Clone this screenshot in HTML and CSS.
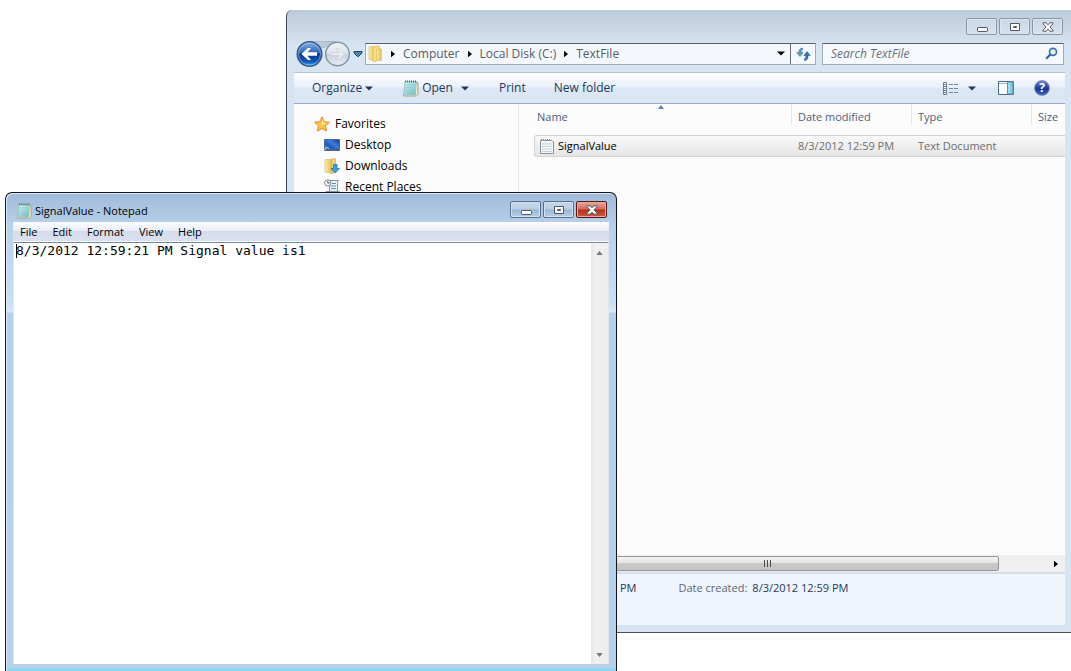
FILE: index.html
```html
<!DOCTYPE html>
<html lang="en">
<head>
<meta charset="utf-8">
<title>SignalValue - Notepad</title>
<link rel="stylesheet" href="styles.css">
</head>
<body>
<svg class="defs" aria-hidden="true">
  <defs>
    <linearGradient id="pad" x1="0" y1="0" x2="1" y2="1"><stop offset="0" stop-color="#d5f3f1"/><stop offset=".55" stop-color="#9fd6da"/><stop offset="1" stop-color="#72b5c0"/></linearGradient>
    <linearGradient id="gold" x1="0" x2="1"><stop offset="0" stop-color="#fbeeb0"/><stop offset="1" stop-color="#e3bd52"/></linearGradient>
    <linearGradient id="back" x1="0" y1="0" x2="0" y2="1"><stop offset="0" stop-color="#8bb1e0"/><stop offset=".45" stop-color="#2f66b8"/><stop offset=".5" stop-color="#0c3a94"/><stop offset=".8" stop-color="#1454b8"/><stop offset="1" stop-color="#3ba8f0"/></linearGradient>
    <linearGradient id="fwd" x1="0" y1="0" x2="0" y2="1"><stop offset="0" stop-color="#f0f4f9"/><stop offset=".48" stop-color="#dde4ec"/><stop offset=".52" stop-color="#c8d2dd"/><stop offset="1" stop-color="#e6edf4"/></linearGradient>
    <linearGradient id="screen" x1="0" y1="1" x2="1" y2="0"><stop offset="0" stop-color="#7fb3ea"/><stop offset=".35" stop-color="#2458b8"/><stop offset=".6" stop-color="#3d7bdc"/><stop offset="1" stop-color="#12388c"/></linearGradient>
    <symbol id="notepad" viewBox="0 0 16 17">
      <path d="M2.500 2.500h12.500v12l-1.500 1.500H.8z" fill="#f5edd0" stroke="#a99f78"/>
      <path d="M2 1.500h11.500L12.500 15H.8z" fill="url(#pad)" stroke="#8fc4c8" stroke-width=".6"/>
      <path d="M2.500 5h9M2.300 7.500h9M2 10h9M1.800 12.500h9" stroke="#8cc8cd" stroke-width=".6"/>
      <path d="M2.500 .5v2M4.500 .5v2M6.500 .5v2M8.500 .5v2M10.500 .5v2M12.500 .5v2" stroke="#476770" stroke-width="1"/>
    </symbol>
    <symbol id="min" viewBox="0 0 12 10"><rect x="1.500" y="5.500" width="10" height="4" rx=".7" fill="#fff" stroke="#505768"/></symbol>
    <symbol id="max" viewBox="0 0 12 10"><path d="M1.500 1.500h9v7h-9zM4.500 4.500h3v1h-3z" fill="#fff" fill-rule="evenodd" stroke="#505768"/></symbol>
    <symbol id="close" viewBox="0 0 12 10"><path d="M1 .8h3l2 2 2-2h3v1L8 5l3 3.200v1H8l-2-2-2 2H1v-1L4 5 1 1.800z" fill="#fff" stroke="#505768"/></symbol>
    <symbol id="crumb" viewBox="0 0 5 8"><path d="M0 0l5 4-5 4z"/></symbol>
    <symbol id="drop" viewBox="0 0 8 5"><path d="M0 .5h8L4 4.500z"/></symbol>
  </defs>
</svg>

<main class="desktop">
<section class="explorer" aria-label="TextFile">
  <div class="caption">
    <button class="cap" aria-label="Minimize"><svg class="glyph"><use href="#min"/></svg></button>
    <button class="cap" aria-label="Maximize"><svg class="glyph"><use href="#max"/></svg></button>
    <button class="cap" aria-label="Close"><svg class="glyph"><use href="#close"/></svg></button>
  </div>
  <div class="navbar">
    <div class="travel">
      <svg width="54" height="28" viewBox="0 0 54 28" class="travel-art" aria-hidden="true">
        <path d="M14 1.500h26c-8 2-9 6-12.500 6S22 3.500 14 1.500z" fill="#bccbdc" stroke="#a3b5c8"/>
        <circle cx="13.500" cy="14" r="12.300" fill="url(#back)" stroke="#3b5788" stroke-width="1.400"/>
        <circle cx="13.500" cy="14" r="11" fill="none" stroke="#b9d4f4" stroke-opacity=".55"/>
        <path d="M5.500 14l6.500-6h3l-3.500 4.200H21v3.600h-9.500L15 20h-3z" fill="#fff"/>
        <circle cx="41.500" cy="14" r="11.800" fill="url(#fwd)" stroke="#8293a6" stroke-width="1.400"/>
        <path d="M49 14l-6-5.500h-3l3.300 4H35v3h8.300l-3.300 4h3z" fill="#e7ecf1" stroke="#c6d0da" stroke-width=".7"/>
      </svg>
      <button class="travel-btn" aria-label="Back"></button>
      <button class="travel-btn" aria-label="Forward"></button>
    </div>
    <button class="plain history" aria-label="Recent pages"><svg width="10" height="6" viewBox="0 0 10 6"><path d="M1 .5h8v1.500L5.500 5.500h-1L1 2z" fill="#4a86b4" stroke="#1f4468"/></svg></button>
    <div class="address">
      <svg class="folder" width="15" height="17" viewBox="0 0 15 17" aria-hidden="true"><path d="M1 1.500h5.500v14.300L1 14.500z" fill="url(#gold)" stroke="#e0c26b" stroke-width=".7"/><path d="M5 3l3-2h3.500v12L8 16.500H5z" fill="#f4dc85" stroke="#dcb958" stroke-width=".6"/><path d="M8.500 4h4.800v11.500H8.500z" fill="url(#gold)" stroke="#dcb958" stroke-width=".6"/></svg>
      <svg class="arrow"><use href="#crumb"/></svg>
      <button class="plain">Computer</button>
      <svg class="arrow"><use href="#crumb"/></svg>
      <button class="plain">Local Disk (C:)</button>
      <svg class="arrow"><use href="#crumb"/></svg>
      <button class="plain">TextFile</button>
      <button class="plain address-drop" aria-label="Previous locations"><svg class="down"><use href="#drop"/></svg></button>
      <button class="plain refresh" aria-label="Refresh"><svg width="15" height="14" viewBox="0 0 15 14"><path d="M6.500 1C4.500 1 3 2.500 3 4.500v1H.8L4 9.500l3.200-4H5.200v-1c0-1 .5-1.500 1.300-1.500z" fill="#5b9acb" stroke="#2e6799" stroke-width=".5"/><path d="M8.500 13.500c2 0 3.500-1.500 3.500-3.500V8.500h2.200L11 4.500l-3.200 4h2V10c0 1-.5 1.500-1.300 1.500z" fill="#3774ad" stroke="#1f4f83" stroke-width=".5"/></svg></button>
    </div>
    <div class="search">
      <input type="text" placeholder="Search TextFile" aria-label="Search TextFile">
      <svg width="13" height="13" viewBox="0 0 13 13" aria-hidden="true"><circle cx="8" cy="4.800" r="3.500" fill="#eef6fc" stroke="#3d74a8" stroke-width="1.700"/><path d="M5.300 7.500L1.200 11.800" stroke="#2f6295" stroke-width="2"/></svg>
    </div>
  </div>
  <div class="toolbar">
    <button class="plain organize">Organize <svg class="down"><use href="#drop"/></svg></button>
    <button class="plain open"><svg width="16" height="17"><use href="#notepad"/></svg>Open</button>
    <button class="plain open-drop" aria-label="Open with"><svg class="down"><use href="#drop"/></svg></button>
    <button class="plain print">Print</button>
    <button class="plain">New folder</button>
    <div class="tools">
      <button class="plain" aria-label="Change your view"><svg width="16" height="13" viewBox="0 0 16 13"><path d="M.5.500h3v12h-3zM.5 4.500h3M.5 8.500h3" fill="#fff" stroke="#687c94"/><path d="M2 2v1M2 6v1M2 10v1" stroke="#20364f"/><path d="M6 2.500h10M6 6.500h10M6 10.500h10" stroke="#7487a0" stroke-dasharray="4 1"/></svg></button>
      <button class="plain" aria-label="More views"><svg class="down"><use href="#drop"/></svg></button>
      <button class="plain pane" aria-label="Show the preview pane"><svg width="16" height="14" viewBox="0 0 16 14"><path d="M.5.500h15v13H.5z" fill="#fff" stroke="#426c8c"/><path d="M1 2.500h9" stroke="#9fb4c4"/><path d="M9.500 1h5.500v12H9.500z" fill="#82cae2" stroke="#5d93ae"/><path d="M11 2v10" stroke="#c5eaf4"/></svg></button>
      <button class="plain help" aria-label="Get help">?</button>
    </div>
  </div>
  <div class="body">
    <nav class="side">
      <a href="#" class="fav"><svg width="16" height="16" viewBox="0 0 16 16"><path d="M8 .8l2.200 4.900 5.200.6-3.900 3.500 1.100 5.300L8 12.500l-4.600 2.600 1.100-5.300L.6 6.300l5.200-.6z" fill="#fbc54a" stroke="#e08a2c" stroke-linejoin="round"/><path d="M8 3.200l1.300 3.400 3.200.5L8 9z" fill="#fff0a8"/></svg>Favorites</a>
      <a href="#"><svg width="16" height="16" viewBox="0 0 16 16"><path d="M.5 2.500h15v11H.5z" fill="url(#screen)" stroke="#496a98"/><path d="M1 11.500h14V13H1z" fill="#3e5f90"/><path d="M1 13c0-3 2-3 4-1" fill="none" stroke="#c8dff5"/></svg>Desktop</a>
      <a href="#"><svg width="16" height="16" viewBox="0 0 16 16"><path d="M1 1.500h6.500v14L1 14z" fill="url(#gold)" stroke="#d9b659" stroke-width=".6"/><path d="M7.500 .8h4v13.500l-4 1.200z" fill="#efd178" stroke="#cfa640" stroke-width=".6"/><path d="M9.500 6.500h3.500v4h2.500L11.200 15 7 10.500h2.500z" fill="#3da3de" stroke="#1b67a8" stroke-width=".7"/></svg>Downloads</a>
      <a href="#"><svg width="16" height="16" viewBox="0 0 16 16"><path d="M5.500 1.500h9c-1 1-1 2-1 3v8h-8z" fill="#e9f2f7" stroke="#8195a5"/><path d="M2 12.500h13.500c0 2-1 2.500-2 2.500H3.500C2.500 15 2 14 2 12.500z" fill="#ccdbe5" stroke="#8195a5"/><circle cx="3.800" cy="4" r="3.200" fill="#f3f6f8" stroke="#7e8c98"/><path d="M3.800 2v2h1.700" fill="none" stroke="#445"/><path d="M8 4.500h4M7 7h5M7 9.500h5" stroke="#5e94b8"/></svg>Recent Places</a>
    </nav>
    <div class="content">
      <svg class="sort" width="6" height="4" viewBox="0 0 6 4" aria-hidden="true"><path d="M0 4l3-4 3 4z" fill="#5f8299"/></svg>
      <div class="files">
        <table>
          <thead><tr><th>Name</th><th class="mid">Date modified</th><th class="mid">Type</th><th class="size">Size</th></tr></thead>
          <tbody><tr><td class="name"><span><svg width="14" height="16" viewBox="0 0 14 16"><path d="M.5 2.500h11.500l1.500 1.500v11.500H.5z" fill="#f4f7f8" stroke="#8d9499"/><path d="M2 6h10M2 8.500h10M2 11h10M2 13.500h10" stroke="#bfd3dc"/><path d="M1.500 1v2M3.500 1v2M5.500 1v2M7.500 1v2M9.500 1v2" stroke="#8b9297"/></svg>SignalValue</span></td><td>8/3/2012 12:59 PM</td><td>Text Document</td><td></td></tr></tbody>
        </table>
      </div>
      <div class="hscroll"><div class="thumb"><i></i><i></i><i></i></div><svg class="arrow"><use href="#crumb"/></svg></div>
    </div>
  </div>
  <footer class="details"><span class="value">PM</span><span>Date created:</span><span class="value">8/3/2012 12:59 PM</span></footer>
</section>

<section class="notepad" aria-label="SignalValue - Notepad">
  <header class="title">
    <svg width="15" height="16"><use href="#notepad"/></svg>
    <h1>SignalValue - Notepad</h1>
    <div class="caption-set">
      <button class="cap" aria-label="Minimize"><svg class="glyph"><use href="#min"/></svg></button>
      <button class="cap" aria-label="Maximize"><svg class="glyph"><use href="#max"/></svg></button>
      <button class="cap danger" aria-label="Close"><svg class="glyph"><use href="#close"/></svg></button>
    </div>
  </header>
  <div class="client">
    <div class="menu">
      <button class="plain">File</button><button class="plain">Edit</button><button class="plain">Format</button><button class="plain">View</button><button class="plain">Help</button>
    </div>
    <div class="editor">
      <textarea aria-label="Text" spellcheck="false">8/3/2012 12:59:21 PM Signal value is1</textarea>
      <span class="caret"></span>
      <div class="vscroll"><svg class="tip" viewBox="0 0 8 5"><path d="M0 5l4-5 4 5z"/></svg><svg class="tip" viewBox="0 0 8 5"><path d="M0 0h8L4 5z"/></svg></div>
    </div>
  </div>
</section>
</main>
</body>
</html>
```

FILE: styles.css
```css
* { box-sizing: border-box; }
html, body { height: 100%; }
body { margin: 0; background: #fff; font: 11px/16px "Open Sans", "Noto Sans", sans-serif; color: #1e395b; }
svg { display: block; flex: none; }
.defs { position: absolute; width: 0; height: 0; }
.desktop { position: relative; height: 100%; overflow: hidden; }
.plain { display: flex; align-items: center; border: 0; padding: 0; background: none; font: inherit; color: inherit; white-space: nowrap; }
.down { width: 8px; height: 5px; }
.arrow { width: 4px; height: 8px; }

/* Explorer window */
.explorer { position: absolute; top: 10px; left: 286px; right: 0; bottom: 38px; display: flex; flex-direction: column; padding: 0 6px 7px 7px; border-left: 1px solid #3d4859; border-bottom: 1px solid #46505f; border-top-left-radius: 6px; background: linear-gradient(#bccbd9, #d7e4f1 36px); }
.caption { display: flex; justify-content: flex-end; gap: 2px; padding: 8px 2px 0 0; }
.cap { display: flex; align-items: center; justify-content: center; width: 31px; height: 17px; padding: 0; border: 1px solid #8995a9; border-radius: 2px; background: linear-gradient(#cbd7e4, #d6e2ee); box-shadow: inset 0 0 0 1px #dde7f1; }
.glyph { width: 12px; height: 10px; }
.navbar { display: flex; align-items: center; height: 37px; padding: 0 1px 0 2px; }
.travel { position: relative; display: flex; width: 54px; height: 28px; }
.travel-art { position: absolute; inset: 0; }
.travel-btn { position: relative; width: 27px; height: 28px; padding: 0; border: 0; border-radius: 50%; background: none; }
.history { width: 15px; padding-left: 3px; }
.address { display: flex; align-items: center; flex: 1; height: 22px; gap: 8px; padding-left: 2px; border: 1px solid #9eabb9; border-top-color: #56616d; background: #f4f7fb; color: #565d68; font-size: 12px; }
.address > .arrow { fill: #000; }
.address-drop { margin-left: auto; margin-right: -3px; fill: #000; }
.refresh { align-self: stretch; width: 25px; justify-content: center; border-left: 1px solid #66707c; }
.search { display: flex; align-items: center; width: 242px; height: 22px; margin-left: 6px; padding: 0 5px 0 8px; border: 1px solid #9eabb9; border-top-color: #56616d; background: #f5f8fc; }
.search input { flex: 1; min-width: 0; padding: 0; border: 0; outline: 0; background: none; font: italic 12px/16px "Open Sans", "Noto Sans", sans-serif; }
.search input::placeholder { color: #6a7078; opacity: 1; }
.toolbar { display: flex; align-items: center; height: 32px; padding-left: 18px; border-top: 1px solid #b4c3d5; border-bottom: 1px solid #98abc8; background: linear-gradient(#fcfdff, #eaf1fa 46%, #dce6f4 50%, #dbe7f5); font-size: 12px; fill: #1e395b; }
.organize { gap: 3px; margin-right: 30px; }
.open { gap: 3px; }
.open-drop { margin: 0 30px 0 8px; }
.print { margin-right: 28px; }
.tools { display: flex; align-items: center; gap: 9px; margin-left: auto; padding-right: 15px; }
.pane { margin-left: 13px; }
.help { justify-content: center; width: 16px; height: 16px; margin-left: 11px; border: 1px solid #8292c0; border-radius: 50%; background: linear-gradient(#6a86cf, #1c378f 55%, #3e5fbd); color: #fff; font-weight: 700; font-size: 12px; line-height: 12px; }
.body { display: flex; flex: 1; min-height: 0; background: #fcfcfc; }
.side { width: 225px; padding: 9px 0 0 30px; border-right: 1px solid #dfe6ef; overflow: hidden; font-size: 12px; }
.side a { display: flex; align-items: center; gap: 5px; height: 21px; color: #000; text-decoration: none; }
.side .fav { margin-left: -10px; }
.content { position: relative; display: flex; flex: 1; flex-direction: column; min-width: 0; }
.sort { position: absolute; left: 139px; top: 1px; }
.files { flex: 1; padding-left: 15px; overflow: hidden; }
table { width: 100%; table-layout: fixed; border-spacing: 0; }
th { height: 31px; padding: 5px 0 0 6px; border: 0 solid; border-left-width: 1px; border-image: linear-gradient(#e2e7ed 60%, #fcfcfc 70%) 1; text-align: left; vertical-align: top; font-weight: 400; color: #4c607a; white-space: nowrap; }
th:first-child { border: 0; padding-left: 3px; }
.mid { width: 120px; }
.size { width: 34px; }
td { height: 22px; padding: 0 0 0 7px; border: solid #d4d4d4; border-width: 1px 0; background: linear-gradient(#f9f9f9, #e5e5e5); color: #6d6d6d; white-space: nowrap; }
td.name { padding-left: 5px; border-left-width: 1px; border-radius: 3px 0 0 3px; color: #000; }
.name span { display: flex; align-items: center; gap: 4px; }
.hscroll { display: flex; align-items: center; justify-content: space-between; height: 17px; padding-right: 7px; background: #efefef; }
.thumb { display: flex; align-items: center; justify-content: center; gap: 2px; width: 89%; height: 15px; padding-left: 18px; border: 1px solid #959595; border-radius: 2px; background: linear-gradient(#f3f3f3, #e4e4e4 45%, #c9c9c9 50%, #c3c3c3); }
.thumb i { width: 1px; height: 7px; background: #4c4c4c; }
.details { display: flex; gap: 5px; height: 53px; padding: 6px 0 0 326px; border-top: 2px solid #d5dfea; background: #f0f4fc; color: #5a6779; }
.value { color: #1e395b; }
.value:first-child { margin-right: 37px; }

/* Notepad window */
.notepad { position: absolute; top: 192px; left: 5px; right: 454px; bottom: 0; display: flex; flex-direction: column; padding: 0 7px 7px; border: 1px solid #10151c; border-bottom: 0; border-radius: 7px 7px 0 0; background: linear-gradient(#a0bad8, #b7cfe8 30px, #ccdff3 110px, #dbe8fa 119px, #b6d0ea 120px, #b9d0eb calc(100% - 3px), #8bd6f1 calc(100% - 3px)); box-shadow: inset 1px 1px 0 #dcebfa; color: #000; }
.title { display: flex; align-items: center; height: 29px; padding: 6px 2px 0 4px; }
.title h1 { margin: 0 0 0 3px; font-size: 11px; line-height: 16px; font-weight: 400; }
.caption-set { display: flex; gap: 2px; margin-left: auto; padding-bottom: 2px; }
.notepad .cap { border-color: #586f8f; background: linear-gradient(#c7d9ec, #b7cde4 48%, #9bb7d3 52%, #b5cfe8); box-shadow: inset 0 0 0 1px #d2e2f2; }
.notepad .danger { border-color: #54181c; background: linear-gradient(#e8a89b, #d3695a 48%, #b3301b 52%, #cf5b40); box-shadow: inset 0 0 0 1px #e9aba0; }
.client { display: flex; flex: 1; flex-direction: column; min-height: 0; background: #fff; }
.menu { display: flex; align-items: center; gap: 15px; height: 19px; padding-left: 7px; background: linear-gradient(#fdfdff, #e9edf6 45%, #d7dced 50%, #dbe0f1); }
.editor { position: relative; display: flex; flex: 1; min-height: 0; margin-top: 1px; border: solid; border-width: 1px 1px 0; border-color: #6d8aa5 #dfe7f0; background: #fff; }
textarea { flex: 1; min-width: 0; padding: 0 2px; border: 0; outline: 0; resize: none; background: #fff; font: 13px/16px "DejaVu Sans Mono", "Liberation Mono", monospace; color: #000; }
.caret { position: absolute; left: 2px; top: 1px; width: 1px; height: 14px; background: #000; }
.vscroll { display: flex; flex-direction: column; align-items: center; justify-content: space-between; width: 17px; padding: 8px 0 7px; background: linear-gradient(90deg, #e6e6e6, #f0f0f0 4px, #eee); fill: #777; }
.tip { width: 7px; height: 4px; }
```
